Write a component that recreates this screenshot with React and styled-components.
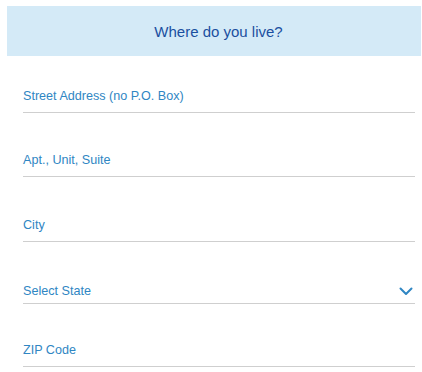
import React from 'react'
import styled, { createGlobalStyle } from 'styled-components'

const fields = [
  { label: 'Street Address (no P.O. Box)', height: 57 },
  { label: 'Apt., Unit, Suite', height: 64 },
  { label: 'City', height: 65 },
  { label: 'Select State', height: 62, select: true },
  { label: 'ZIP Code', height: 63 },
]

function Chevron() {
  return (
    <svg width="14" height="9" viewBox="0 0 14 9">
      <path d="M1.5 1.5 L7 7 L12.5 1.5" fill="none" stroke="#2f86c3" strokeWidth="2" strokeLinecap="round" strokeLinejoin="round" />
    </svg>
  )
}

function App() {
  return (
    <>
      <GlobalStyle />
      <Page>
        <Header>Where do you live?</Header>
        <Form>
          {fields.map((f) => (
            <Field key={f.label} $height={f.height} $select={f.select}>
              <Label>{f.label}</Label>
              {f.select && <Chevron />}
            </Field>
          ))}
        </Form>
      </Page>
    </>
  )
}

export default App

const GlobalStyle = createGlobalStyle`
  body {
    margin: 0;
    background: #fff;
    font-family: "Liberation Sans", Arial, sans-serif;
  }
`

const Page = styled.div`
  padding: 6px 1px 0 7px;
`

const Header = styled.div`
  height: 50px;
  padding-left: 9px;
  background: #d4eaf7;
  color: #1a4fa0;
  font-size: 15px;
  display: flex;
  align-items: center;
  justify-content: center;
`

const Form = styled.div`
  padding: 0 6px 0 16px;
`

const Field = styled.div`
  height: ${(p) => p.$height}px;
  box-sizing: border-box;
  border-bottom: 1px solid #cfcfcf;
  display: flex;
  align-items: flex-end;
  justify-content: space-between;
  padding-bottom: ${(p) => (p.$select ? 4 : 8)}px;
  padding-right: 2px;
  svg {
    margin-bottom: 3px;
  }
`

const Label = styled.span`
  color: #2f86c3;
  font-size: 12.6px;
  line-height: 16px;
`
